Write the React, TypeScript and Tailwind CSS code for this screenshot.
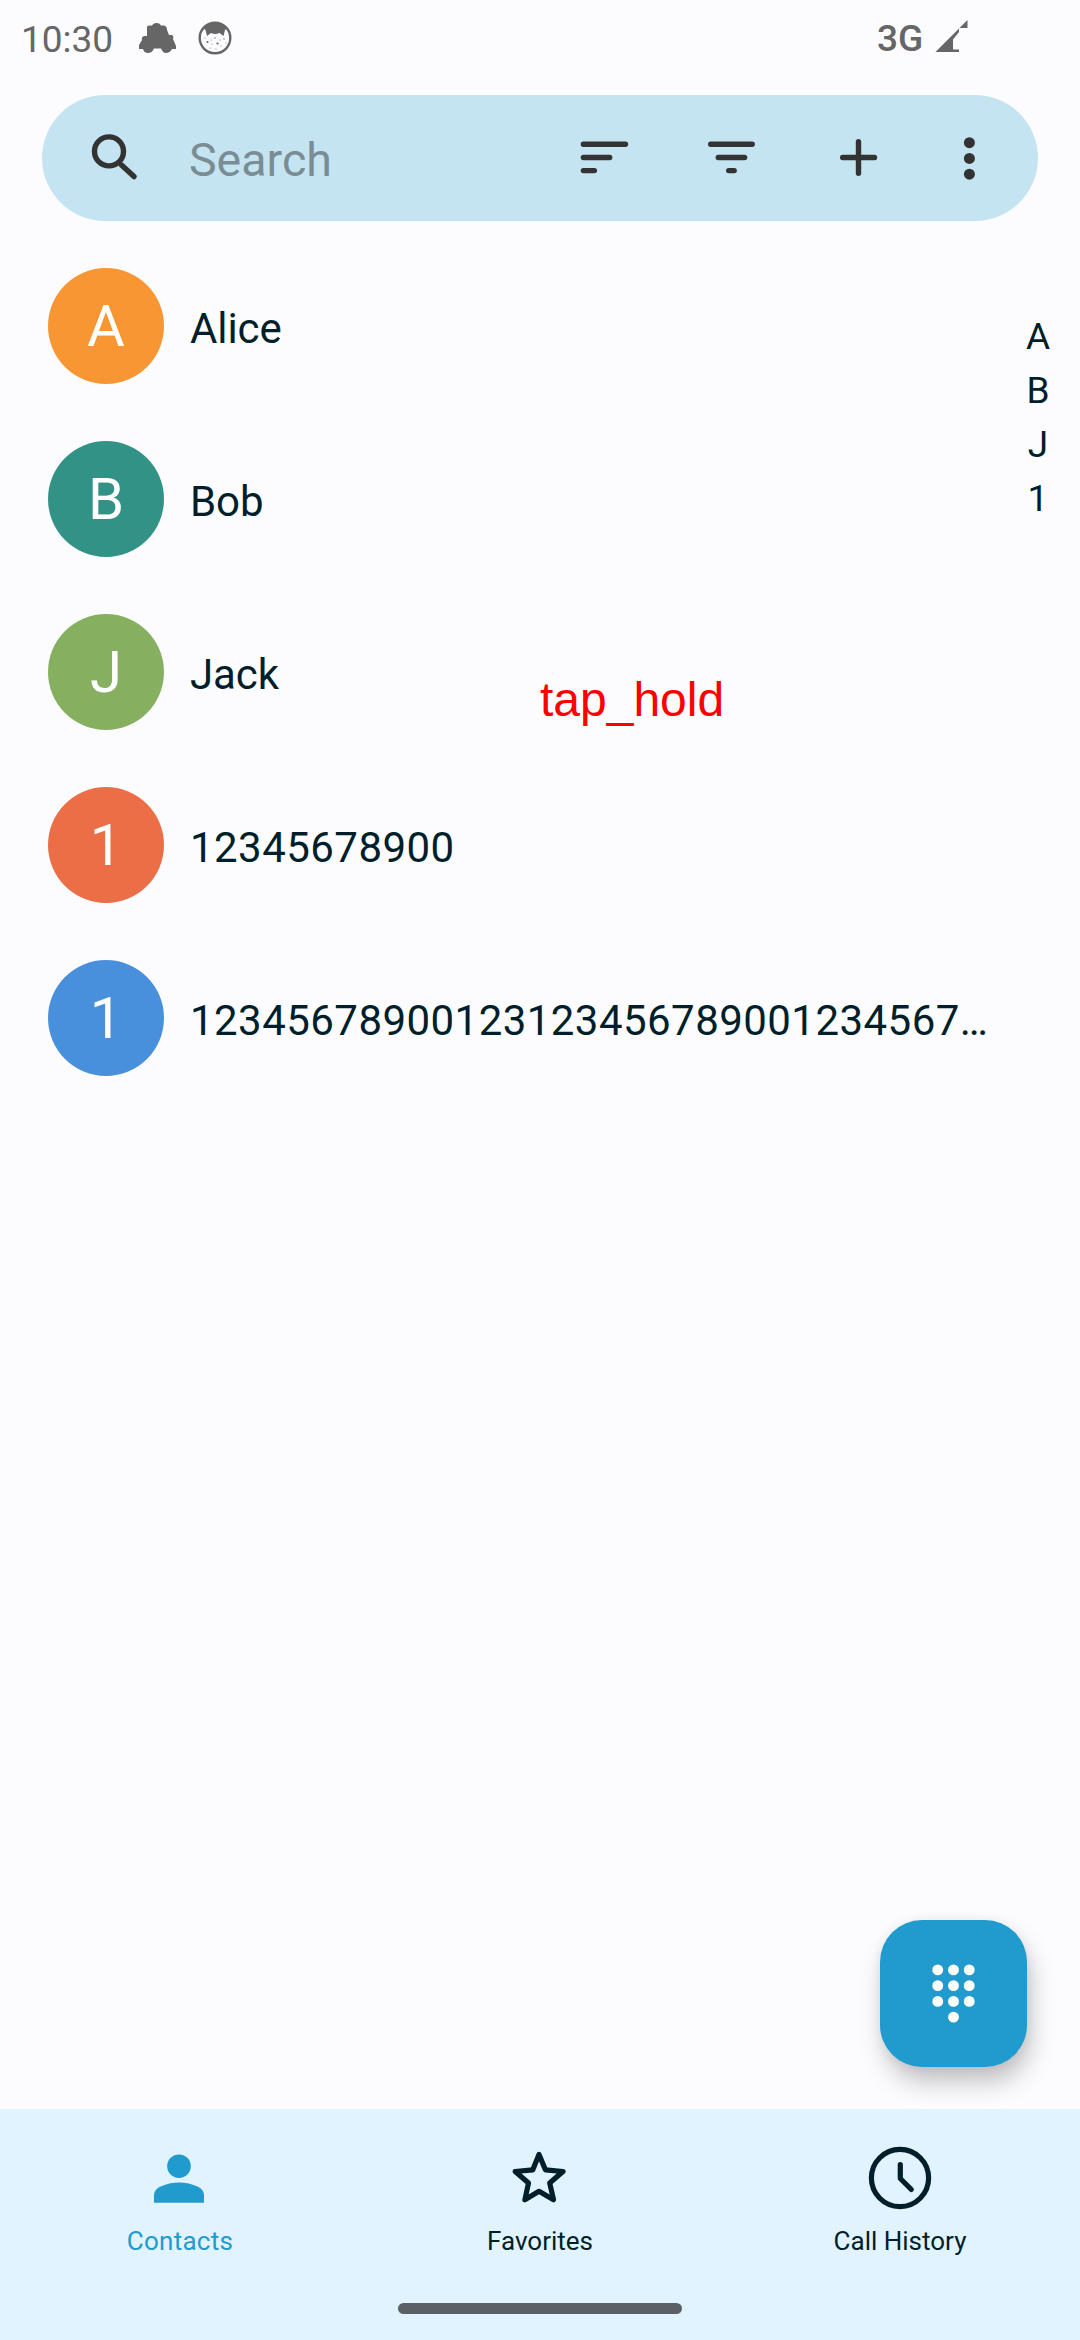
import React from "react";

type Contact = { initial: string; name: string; color: string; numeric?: boolean };

const contacts: Contact[] = [
  { initial: "A", name: "Alice", color: "bg-[#f79633]" },
  { initial: "B", name: "Bob", color: "bg-[#329286]" },
  { initial: "J", name: "Jack", color: "bg-[#86b05f]" },
  { initial: "1", name: "12345678900", color: "bg-[#ec6e47]", numeric: true },
  { initial: "1", name: "12345678900123123456789001234567…", color: "bg-[#4890db]", numeric: true },
];

function StatusBar() {
  return (
    <header className="flex h-[95px] items-start pl-[21px] text-[#666666]">
      <span className="mt-[18px] w-[118px] text-[37px] leading-[43px]">10:30</span>
      <svg className="mt-[22px] h-8 w-[38px]" viewBox="0 0 38 32" fill="currentColor">
        <path d="M8 5 Q8 3.500 10 3.500 H13 Q14 1 17 1 Q21 0.500 22 3.500 H25 Q28 4 28 8 L30 13 H33 Q35 14 34 17 L37 24 V27 H33 Q31 31 27 31 Q24 31 22 26.500 H15 Q13 31 9 31 Q5 31 4 27 H0 V23 L3 18 Q2 15 5 14 H8 Z" />
      </svg>
      <svg className="ml-[21px] mt-5 h-9 w-9" viewBox="0 0 36 36">
        <circle cx="17" cy="18" r="15.300" fill="#fcfcff" stroke="currentColor" strokeWidth="2.4" />
        <path d="M5 8 Q10 2 17 2 Q24 2 29 8 L27 10 L25.500 16 L21.500 13 Q17 15 13 13 L9 16 L7.500 10 Z" fill="currentColor" />
        <g fill="currentColor">
          <circle cx="9.500" cy="22" r="1.100" />
          <circle cx="19.500" cy="23.500" r="1.100" />
          <circle cx="26" cy="19" r="0.700" />
          <circle cx="17" cy="18" r="0.700" />
          <circle cx="14" cy="24" r="0.500" />
          <circle cx="23" cy="26" r="0.500" />
          <circle cx="7" cy="18" r="0.500" />
          <circle cx="12" cy="28" r="0.500" />
          <circle cx="18" cy="29" r="0.500" />
          <circle cx="28" cy="23" r="0.500" />
          <circle cx="13" cy="20" r="0.500" />
          <circle cx="22" cy="20" r="0.500" />
        </g>
      </svg>
      <span className="ml-auto mt-[17px] w-[58px] text-[37px] font-medium leading-[43px]">3G</span>
      <svg className="mr-[112px] mt-5 h-8 w-[33px]" viewBox="0 0 33 32" fill="currentColor">
        <path d="M0 32.500 L32.500 0 V8 H24 V12 L18 19.500 V29.500 H24 V32.500 Z" />
      </svg>
    </header>
  );
}

function BarIcon({ children, className = "" }: { children: React.ReactNode; className?: string }) {
  return (
    <svg
      className={"h-[72px] w-[72px] shrink-0 " + className}
      viewBox="0 0 72 72"
      fill="none"
      stroke="#333333"
      strokeWidth="5.4"
      strokeLinecap="round"
    >
      {children}
    </svg>
  );
}

function SearchBar() {
  return (
    <div className="mx-[42px] flex h-[126px] items-center rounded-full bg-[#c4e4f1] pl-[30px] pr-[33px]">
      <BarIcon>
        <circle cx="37" cy="29.400" r="14.500" />
        <path d="M49.500 43 L62 54.600" />
      </BarIcon>
      <span className="ml-[45px] mt-1 flex-1 text-[46.5px] leading-[54px] text-[#7b8d94]">Search</span>
      <BarIcon>
        <path d="M15.400 22.300 H57.500 M15.400 35.500 H41.700 M15.400 48.600 H26.400" />
      </BarIcon>
      <BarIcon className="ml-[55px]">
        <path d="M15.700 22.300 H57.200 M23.300 35.500 H49.600 M33.700 48.600 H39.200" />
      </BarIcon>
      <BarIcon className="ml-[55px]">
        <path d="M20.700 35.500 H52.500 M36.500 19.700 V51.300" />
      </BarIcon>
      <BarIcon className="ml-[39px]">
        <g fill="#333333" stroke="none">
          <circle cx="36.400" cy="20.700" r="5.500" />
          <circle cx="36.400" cy="36.400" r="5.500" />
          <circle cx="36.400" cy="52.200" r="5.500" />
        </g>
      </BarIcon>
    </div>
  );
}

function ContactRow({ contact }: { contact: Contact }) {
  return (
    <li className="flex h-[116px] items-center">
      <div className={"flex h-[116px] w-[116px] items-center justify-center rounded-full text-[58px] leading-[68px] text-white " + contact.color}>
        {contact.initial}
      </div>
      <span
        className={
          "ml-[26px] mt-[5px] whitespace-nowrap text-[42px] leading-[50px] text-[#001f2a] " +
          (contact.numeric ? "tracking-[0.45px]" : "tracking-[-0.1px]")
        }
      >
        {contact.name}
      </span>
    </li>
  );
}

function DialButton() {
  const dots = [
    [16, 16], [32, 16], [48, 16],
    [16, 32], [32, 32], [48, 32],
    [16, 48], [32, 48], [48, 48],
    [32, 64],
  ];
  return (
    <button className="absolute bottom-[42px] right-[53px] flex h-[147px] w-[147px] items-center justify-center rounded-[42px] bg-[#219bce] shadow-[4px_16px_26px_-2px_rgba(0,0,0,0.25),0_0_12px_rgba(0,0,0,0.06)]">
      <svg className="h-[79px] w-[63px]" viewBox="0 0 64 80" fill="white">
        {dots.map(([x, y]) => (
          <circle key={x + "-" + y} cx={x} cy={y} r="5.5" />
        ))}
      </svg>
    </button>
  );
}

function NavItem({ label, active, children }: { label: string; active?: boolean; children: React.ReactNode }) {
  return (
    <div className={"flex flex-1 flex-col items-center pt-[33px] " + (active ? "tracking-[0.25px] text-[#219bce]" : "text-[#001f2a]")}>
      <svg className="h-[72px] w-[72px]" viewBox="0 0 72 72" fill="none" stroke="currentColor" strokeWidth="5.2" strokeLinecap="round" strokeLinejoin="round">
        {children}
      </svg>
      <span className="mt-[11px] text-[26px] leading-[32px]">{label}</span>
    </div>
  );
}

function BottomNav() {
  return (
    <footer className="flex h-[231px] flex-col items-center bg-[#e0f3ff]">
      <nav className="flex h-[194px] w-full">
        <NavItem label="Contacts" active>
          <g fill="currentColor" stroke="none">
            <circle cx="35" cy="24.200" r="11.800" />
            <path d="M10 60.700 V54 C10 49.500 12.500 46.500 16 44.800 C28 39 42 39 54 44.800 C57.500 46.500 60 49.500 60 54 V60.700 Z" />
          </g>
        </NavItem>
        <NavItem label="Favorites">
          <path d="M35 12.500 L28.800 27.800 L11.200 29.500 L24.500 41 L20.900 57.700 L35 49.300 L49.500 57.700 L45.700 41 L59 29.500 L41.400 27.800 Z" />
        </NavItem>
        <NavItem label="Call History">
          <circle cx="36" cy="36" r="28.600" />
          <path d="M36.300 22.500 V36.500 L47.300 47.500" />
        </NavItem>
      </nav>
      <div className="h-[11px] w-[284px] rounded-full bg-[#5a6066]" />
    </footer>
  );
}

export default function App() {
  return (
    <div className="flex h-[2340px] w-[1080px] flex-col overflow-hidden bg-[#fcfcff] font-['Roboto',sans-serif]">
      <StatusBar />
      <SearchBar />
      <main className="relative flex flex-1 items-start justify-between pl-12 pr-[25px] pt-[47px]">
        <ul className="flex flex-col gap-[57px]">
          {contacts.map((contact) => (
            <ContactRow key={contact.name} contact={contact} />
          ))}
        </ul>
        <div className="mt-[42px] flex w-[34px] flex-col items-center text-[37px] leading-[54px] text-[#001f2a]">
          {["A", "B", "J", "1"].map((letter) => (
            <span key={letter}>{letter}</span>
          ))}
        </div>
        <span className="absolute left-[540px] top-[452px] font-['Liberation_Sans',sans-serif] text-[48px] leading-[54px] text-[#ff0000]">
          tap_hold
        </span>
        <DialButton />
      </main>
      <BottomNav />
    </div>
  );
}
